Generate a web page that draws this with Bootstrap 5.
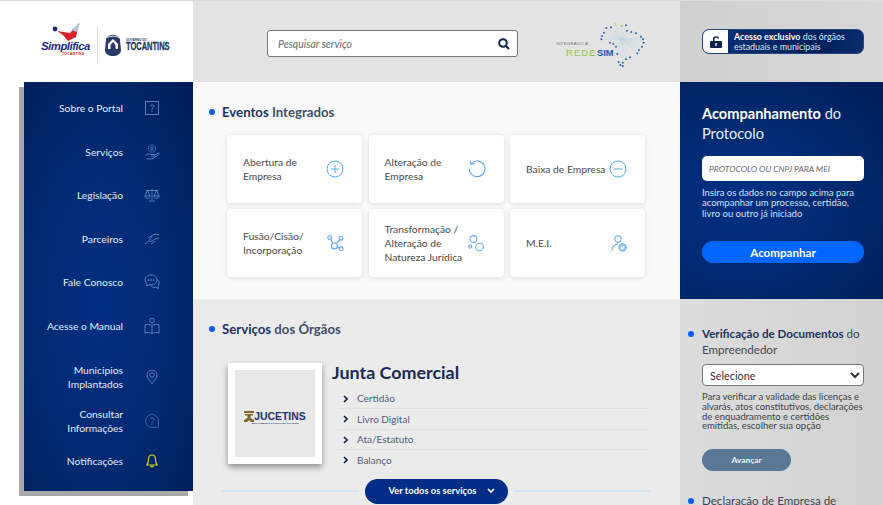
<!DOCTYPE html>
<html lang="pt-BR">
  <head>
    <meta charset="UTF-8" />
    <meta name="viewport" content="width=device-width, initial-scale=1.0" />
    <title>Simplifica Tocantins</title>
    <link href="https://cdn.jsdelivr.net/npm/bootstrap@5.3.0/dist/css/bootstrap.min.css" rel="stylesheet" />
    <style>
      html, body { height: 100%; overflow: hidden; }
      body { font-family: "Lato", "Open Sans", sans-serif; background: #fff; color: #2b3a55; }
      .page-wrap { height: 505px; border-top: 1px solid #dcdcdc; overflow: hidden; }
      .col-left { width: 193px; flex: none; }
      .col-mid { width: 487px; flex: none; }
      .col-right { width: 203px; flex: none; }
      .top-band { height: 81px; }

      /* logos */
      .brand-row { padding: 7px 0 0 41px; }
      .brand-simplifica { width: 50px; position: relative; height: 30px; flex: none; }
      .brand-word { font: italic 700 11.4px/12px "Liberation Sans", sans-serif; letter-spacing: -.5px; color: #1c2a8c; position: absolute; left: 0; top: 10px; }
      .brand-sub { font: 700 3.4px/4px "Liberation Sans", sans-serif; color: #d8252e; position: absolute; left: 21px; top: 22px; letter-spacing: .3px; }
      .brand-bird { position: absolute; left: 11px; top: -7px; }
      .brand-sep { width: 1px; height: 36px; background: #d9d9d9; margin: 0 6px; flex: none; }
      .brand-gov { font: 700 10px/10px "Liberation Sans", sans-serif; color: #25355f; transform: scaleX(.75); transform-origin: left; width: 46px; -webkit-text-stroke: .3px #25355f; }
      .brand-gov-sub { font: 700 3px/4px "Liberation Sans", sans-serif; color: #25355f; }

      /* sidebar */
      .side-holder { padding-left: 24px; }
      .side-menu { height: 409px; padding-top: 16px; color: #e4edf8; font-size: 10.3px; line-height: 14px;
        background: radial-gradient(ellipse at 45% 55%, #003084 0%, #00296f 55%, #001d58 100%);
        box-shadow: -5px 5px 0 #a8a8a8; }
      .side-item { height: 20px; margin-bottom: 23.6px; padding-right: 70px; position: relative; text-align: right; display: flex; align-items: center; justify-content: flex-end; text-decoration: none; color: inherit; }
      .side-item svg { position: absolute; left: 128px; top: 50%; transform: translate(-50%, -50%); }
      .side-two { height: 34px; margin-bottom: 10px; }
      .side-six { margin-bottom: 24px; }
      .side-eight { margin-bottom: 13px; }

      /* middle */
      .band-search { background: #e3e3e3; }
      .search-box { width: 251px; height: 27px; border: 1px solid #777; border-radius: 3px; background: #fff; margin: 4px 0 0 74px; flex: none; }
      .search-box input { font-size: 10.5px; font-style: italic; padding: 0 0 0 10px; height: 25px; border: 0; background: transparent; box-shadow: none; color: #777; }
      .search-box input::placeholder, .proto-input::placeholder { color: #6b6b6b; opacity: 1; }
      .search-box svg { margin-right: 7px; flex: none; }
      .redesim { margin: 5px 0 0 38px; flex: none; }
      .eventos-area { height: 217px; background: #fafafa; padding: 21px 35px 0 34px; }
      .orgaos-area { height: 207px; background: #ebebeb; padding: 21px 35px 0 34px; }
      .sec-title { font-size: 13.2px; font-weight: 700; color: #1d3260; line-height: 18px; margin: 0 0 0 -5px; position: relative; }
      .sec-title span { color: #414e68; }
      .blue-dot::before { content: ""; position: absolute; left: -13px; top: 6px; width: 6px; height: 6px; border-radius: 50%; background: #0a5bf0; }
      .event-grid { display: grid; grid-template-columns: repeat(3, 135px); grid-auto-rows: 68px; column-gap: 6.5px; row-gap: 6px; margin-top: 14px; }
      .event-card { border: 0; border-radius: 4px; box-shadow: 0 1px 5px rgba(0,0,0,.14); padding: 0 18px 0 16px; font-size: 10.3px; line-height: 14px; color: #4a4a4a; background: #fff; }
      .event-card svg { flex: none; }
      .icon-nudge { margin-right: 2px; }

      .junta-row { margin-top: 25px; padding-left: 1px; }
      .junta-pic { width: 94px; height: 101px; padding-top: 9px; background: #e8e8e8; border: 7px solid #fff; box-shadow: 0 3px 6px rgba(0,0,0,.4); flex: none; }
      .juce-word { font: 700 10.4px/11px "Liberation Sans", sans-serif; color: #25306e; }
      .juce-sub { font: 700 2px/3px "Liberation Sans", sans-serif; color: #25306e; white-space: nowrap; }
      .junta-title { font-size: 17.9px; font-weight: 700; color: #172a55; line-height: 18px; margin: 0 0 8px; }
      .junta-info { margin-left: 10px; width: 316px; flex: none; }
      .junta-list { list-style: none; margin: 0 0 0 6px; padding: 0; }
      .junta-list li { height: 20.4px; border-bottom: 1px solid #e0e0e0; font-size: 10px; color: #4d5c7c; padding-left: 19px; display: flex; align-items: center; position: relative; }
      .junta-list li:last-child { border-bottom: 0; }
      .junta-list svg { position: absolute; left: 5px; top: 6px; }
      .more-row { margin: 8px -5px 0 -5px; }
      .more-line { flex: 1; height: 2px; background: #d3e1f6; }
      .more-btn { width: 143px; height: 25px; border-radius: 13px; background: #002d85; color: #fff; font-size: 9.4px; font-weight: 700; border: 0; padding: 0 0 0 12px; margin: 0 6px; flex: none; }
      .more-btn svg { margin-left: 11px; }

      /* right */
      .band-access { background: linear-gradient(90deg, #d0d0d0, #d8d8d8); padding: 28px 19px 0 22px; }
      .access-pill { height: 25px; border-radius: 7px; overflow: hidden; border: 1px solid #25457c; background: linear-gradient(90deg, #0a3378, #001f5c 70%, #0a2c6b); color: #dbe6f5; font-size: 8.9px; line-height: 10px; }
      .access-lock { width: 25px; background: #fff; flex: none; }
      .access-txt { padding-left: 6px; white-space: nowrap; }
      .access-pill b { color: #fff; }
      .proto-panel { height: 217px; padding: 22px 19px 0 22px; color: #fff;
        background: radial-gradient(ellipse at 30% 55%, #003084 0%, #00296f 50%, #001d58 100%); }
      .proto-title { font-size: 14.6px; line-height: 20px; font-weight: 400; color: #e3ecf8; margin: 0 0 12px; }
      .proto-title b { color: #fff; }
      .proto-input { height: 25px; border-radius: 5px; border: 0; font-size: 8.5px; font-style: italic; padding: 0 7px; }
      .proto-help { font-size: 9.5px; line-height: 10.4px; color: #d6e3f4; margin: 7px 0 0; }
      .proto-btn { display: block; width: 100%; height: 22px; margin-top: 22px; padding: 0; border: 0; border-radius: 11px; background: #0066ff; color: #fff; font-size: 11.6px; font-weight: 700; }
      .verify-area { height: 207px; background: linear-gradient(90deg, #dcdcdc, #d2d2d2); padding: 27px 19px 0 22px; }
      .verify-title { font-size: 11.6px; line-height: 16px; font-weight: 400; color: #3c4656; margin: 0; position: relative; }
      .verify-title b { color: #1d3260; }
      .verify-title.blue-dot::before { left: -14px; top: 5px; }
      .verify-select { height: 22px; margin-top: 6px; padding: 0 2px 0 3px; font-size: 10.8px; border: 1px solid #777; border-radius: 4px; color: #333; appearance: auto; background-image: none; }
      .verify-help { font-size: 9.5px; line-height: 9.8px; color: #3a3f48; margin: 6px 0 0; white-space: nowrap; }
      .verify-btn { display: block; width: 89px; height: 22px; border: 0; padding: 0; margin-top: 18px; border-radius: 11px; background: #5a7896; color: #eef2f6; font-size: 8.4px; font-weight: 700; }
      .verify-next { margin-top: 22px; }
    </style>
  </head>
  <body>
    <div class="page-wrap d-flex">
      <!-- Left column -->
      <div class="col-left">
        <div class="top-band brand-row d-flex align-items-center">
          <div class="brand-simplifica">
            <svg class="brand-bird" width="32" height="20" viewBox="0 0 32 20">
              <circle cx="3" cy="6" r="2.4" fill="#1b2a78" />
              <path d="M5 8 L18 10 L27 0 L24 14 L16 18 L11 12Z" fill="#d8202c" />
              <path d="M19 7 L28 0 L25 9Z" fill="#b9c2dc" />
            </svg>
            <span class="brand-word">Simplifica</span>
            <span class="brand-sub">TOCANTINS</span>
          </div>
          <div class="brand-sep"></div>
          <svg width="18" height="23" viewBox="0 0 18 23" class="flex-shrink-0">
            <path d="M9 1 C13 1 16 3 16 6 L17 16 C17 20 13 22 9 22 C5 22 1 20 1 16 L2 6 C2 3 5 1 9 1Z" fill="#2a3a66" />
            <path d="M9 5 L14 10 L14 15 L4 15 L4 10Z" fill="#fff" />
            <path d="M9 8 L11.5 11 L11.5 15 L6.5 15 L6.5 11Z" fill="#2a3a66" />
            <path d="M3 3.5 C6 1.8 12 1.8 15 3.5" stroke="#fff" stroke-width=".8" fill="none" />
          </svg>
          <div class="ms-1">
            <div class="brand-gov-sub">GOVERNO DO</div>
            <div class="brand-gov">TOCANTINS</div>
          </div>
        </div>
        <div class="side-holder">
          <nav class="side-menu">
            <a class="side-item" href="#">Sobre o Portal
              <svg width="14" height="14" viewBox="0 0 14 14" fill="none" stroke="#5d8cc4" stroke-width=".9"><rect x=".5" y=".5" width="13" height="13" /><path d="M5 5.2 C5 3.4 9 3.4 9 5.2 C9 6.8 7 6.6 7 8.4 M7 9.6 V10.8" /></svg>
            </a>
            <a class="side-item" href="#">Serviços
              <svg width="16" height="16" viewBox="0 0 16 16" fill="none" stroke="#5d8cc4" stroke-width=".9"><circle cx="8" cy="4.5" r="3.6" stroke-dasharray="2 .6" /><circle cx="8" cy="4.5" r="1.4" /><path d="M1 12 C3 9.5 5 9.5 7 10.5 H10 C11 10.5 11 12 10 12 H7 M10.5 11 L14 9 C15.5 8.5 15.5 10 14.5 10.6 L9 14.5 C7 15.5 4 14.5 2.5 14.8" /></svg>
            </a>
            <a class="side-item" href="#">Legislação
              <svg width="16" height="14" viewBox="0 0 16 14" fill="none" stroke="#5d8cc4" stroke-width=".9"><path d="M8 1 V12 M5 13 H11 M2 2.5 H14 M3.4 2.5 L1 8 C1 11 6 11 6 8 L3.4 2.5 M12.6 2.5 L10 8 C10 11 15 11 15 8 L12.6 2.5 M1 8 H6 M10 8 H15" /></svg>
            </a>
            <a class="side-item" href="#">Parceiros
              <svg width="16" height="12" viewBox="0 0 16 12" fill="none" stroke="#5d8cc4" stroke-width=".9"><path d="M1 11 L5 8 M5 8 L9 2 C10 1 12 1 15 2 M4 5 L8 2.5 M6 9 L11 6 L15 5 M7 11 L11 8" /></svg>
            </a>
            <a class="side-item" href="#">Fale Conosco
              <svg width="16" height="16" viewBox="0 0 16 16" fill="none" stroke="#5d8cc4" stroke-width=".9"><path d="M7 1 C3 1 1 3.4 1 6 C1 7.6 1.8 8.8 3 9.6 L2.6 12 L5.4 10.6 C9.5 11.4 13 9.4 13 6 C13 3.4 11 1 7 1Z" /><path d="M13.4 5.6 C15 6.6 15.4 8.4 15 10 C14.7 11 14 11.6 14 12 L14.4 14.6 L11.6 13.2 C9.6 13.6 7.6 13 6.6 11.4" /><circle cx="4.6" cy="6" r=".5" /><circle cx="7" cy="6" r=".5" /><circle cx="9.4" cy="6" r=".5" /></svg>
            </a>
            <a class="side-item side-six" href="#">Acesse o Manual
              <svg width="16" height="17" viewBox="0 0 16 17" fill="none" stroke="#5d8cc4" stroke-width=".9"><circle cx="8" cy="3" r="2.3" /><path d="M8 8 C6 6.6 3.4 6.6 1 7.2 V15.5 C3.4 14.9 6 14.9 8 16 C10 14.9 12.6 14.9 15 15.5 V7.2 C12.6 6.6 10 6.6 8 8Z M8 8 V16" /></svg>
            </a>
            <a class="side-item side-two" href="#"><span>Municipios<br />Implantados</span>
              <svg width="12" height="15" viewBox="0 0 12 15" fill="none" stroke="#5d8cc4" stroke-width=".9"><path d="M6 14.3 C3.6 10.6 1 8.6 1 5.6 C1 2.8 3.2 .7 6 .7 C8.8 .7 11 2.8 11 5.6 C11 8.6 8.4 10.6 6 14.3Z" /><circle cx="6" cy="5.4" r="2.3" /></svg>
            </a>
            <a class="side-item side-two side-eight" href="#"><span>Consultar<br />Informações</span>
              <svg width="14" height="14" viewBox="0 0 14 14" fill="none" stroke="#3f74b4" stroke-width=".9"><path d="M7 .6 C3.4 .6 .6 3.4 .6 7 C.6 10.6 3.4 13.4 7 13.4 H13.4 V12.4 C13.4 12.4 13.4 9 13.4 7 C13.4 3.4 10.6 .6 7 .6Z" /><path d="M5 5.2 C5 3.4 9 3.4 9 5.2 C9 6.6 7 6.6 7 8.2 M7 9.4 V10.4" /></svg>
            </a>
            <a class="side-item" href="#">Notificações
              <svg width="12" height="14" viewBox="0 0 12 14" fill="none" stroke="#d6d214" stroke-width="1.2"><path d="M6 1 C3.6 1 2.6 3 2.6 5 C2.6 8 1.6 10 .8 11 H11.2 C10.4 10 9.4 8 9.4 5 C9.4 3 8.4 1 6 1Z" /><path d="M4.6 11.4 C4.6 13.4 7.4 13.4 7.4 11.4" /></svg>
            </a>
          </nav>
        </div>
      </div>

      <!-- Middle column -->
      <div class="col-mid">
        <div class="top-band band-search d-flex align-items-center">
          <div class="search-box d-flex align-items-center">
            <input class="form-control" type="text" placeholder="Pesquisar serviço" />
            <svg width="12" height="12" viewBox="0 0 12 12" fill="none" stroke="#0c2350" stroke-width="2"><circle cx="5" cy="5" r="3.8" /><path d="M7.8 7.8 L11 11" /></svg>
          </div>
          <svg class="redesim" width="90" height="48" viewBox="0 0 90 48">
            <g stroke="#a9d3e4" stroke-width=".35"><path d="M65.7 19.3 L50.3 8 M65.7 19.3 L55 7.3 M65.7 19.3 L59.3 4 M65.7 19.3 L65.7 6 M65.7 19.3 L70 5.3 M65.7 19.3 L71 10.7 M65.7 19.3 L75.3 12 M65.7 19.3 L80 13.3 M65.7 19.3 L85 16.7 M65.7 19.3 L87 19.3 M65.7 19.3 L87.7 22.7 M65.7 19.3 L86 26.7 M65.7 19.3 L83 30 M65.7 19.3 L81.3 33.3 M65.7 19.3 L74 37.3 M65.7 19.3 L70 39.3 M65.7 19.3 L66.7 42.7 M65.7 19.3 L61.3 34 M65.7 19.3 L54 22.7 M65.7 19.3 L60 26.7 M65.7 19.3 L48 12.7 M65.7 19.3 L46 16 M65.7 19.3 L45.3 19.3" /></g>
            <g fill="#2f5fb4">
              <circle cx="70" cy="5.3" r="1" /><circle cx="50.3" cy="8" r="1" /><circle cx="55" cy="7.3" r="1" /><circle cx="48" cy="12.7" r="1" /><circle cx="46" cy="16" r="1" /><circle cx="45.3" cy="19.3" r="1" /><circle cx="71" cy="10.7" r="1" /><circle cx="75.3" cy="12" r="1" /><circle cx="80" cy="13.3" r="1" /><circle cx="85" cy="16.7" r="1" /><circle cx="87" cy="19.3" r="1" /><circle cx="87.7" cy="22.7" r="1" /><circle cx="86" cy="26.7" r="1" /><circle cx="83" cy="30" r="1" /><circle cx="81.3" cy="33.3" r="1" /><circle cx="74" cy="37.3" r="1" /><circle cx="70" cy="39.3" r="1" /><circle cx="66.7" cy="42.7" r="1" /><circle cx="62.7" cy="42" r="1" /><circle cx="66.7" cy="46" r="1" /><circle cx="64.3" cy="45" r="1" /><circle cx="54" cy="22.7" r="1" /><circle cx="57.3" cy="24" r="1" /><circle cx="60" cy="26.7" r="1" /><circle cx="61.3" cy="34" r="1" />
            </g>
            <circle cx="59.3" cy="4" r="1.1" fill="#e8d92a" /><circle cx="65.7" cy="6" r="1" fill="#8fc43a" />
            <text x="0" y="25" font-family="Liberation Sans, sans-serif" font-size="4.4" letter-spacing=".2" fill="#777">INTEGRADO A</text>
            <text x="10" y="36" font-family="Liberation Sans, sans-serif" font-size="9.6" fill="#92c63e" letter-spacing="1">REDE</text>
            <text x="41" y="36" font-family="Liberation Sans, sans-serif" font-size="9.4" font-weight="700" fill="#2459a6">SIM</text>
          </svg>
        </div>

        <section class="eventos-area">
          <h2 class="sec-title blue-dot">Eventos <span>Integrados</span></h2>
          <div class="event-grid">
            <div class="card event-card d-flex flex-row align-items-center justify-content-between">
              <span>Abertura de<br />Empresa</span>
              <svg width="18" height="18" viewBox="0 0 18 18" fill="none" stroke="#4fb0ee" stroke-width="1"><circle cx="9" cy="9" r="8" /><path d="M9 5 V13 M5 9 H13" /></svg>
            </div>
            <div class="card event-card d-flex flex-row align-items-center justify-content-between">
              <span>Alteração de<br />Empresa</span>
              <svg width="18" height="18" viewBox="0 0 18 18" fill="none" stroke="#5aa6ea" stroke-width="1.1"><path d="M3.6 3.4 A7.8 7.8 0 1 1 1.4 8.6" /><path d="M2.4 .8 L3.2 4.4 L6.8 3.8" /></svg>
            </div>
            <div class="card event-card d-flex flex-row align-items-center justify-content-between">
              <span>Baixa de Empresa</span>
              <svg width="18" height="18" viewBox="0 0 18 18" fill="none" stroke="#4fb0ee" stroke-width="1"><circle cx="9" cy="9" r="8" /><path d="M4.5 9 H13.5" /></svg>
            </div>
            <div class="card event-card d-flex flex-row align-items-center justify-content-between">
              <span>Fusão/Cisão/<br />Incorporação</span>
              <svg width="17" height="17" viewBox="0 0 17 17" fill="none" stroke="#5aa6ea" stroke-width="1.1"><circle cx="2.6" cy="2.6" r="1.9" /><circle cx="14" cy="3.2" r="1.9" /><circle cx="14.2" cy="13.8" r="1.9" /><circle cx="7.4" cy="11" r="3" /><path d="M3.6 4.2 L6 8.4 M12.8 4.8 L9.4 8.6 M10.2 12 L12.4 13.2" /></svg>
            </div>
            <div class="card event-card d-flex flex-row align-items-center justify-content-between">
              <span>Transformação /<br />Alteração de<br />Natureza Jurídica</span>
              <svg class="icon-nudge" width="16" height="17" viewBox="0 0 16 17" fill="none" stroke="#5aa6ea" stroke-width="1.1"><circle cx="5.4" cy="4" r="3.4" /><circle cx="11.6" cy="12" r="3.8" /><circle cx="2.2" cy="11.6" r="1.6" /></svg>
            </div>
            <div class="card event-card d-flex flex-row align-items-center justify-content-between">
              <span>M.E.I.</span>
              <svg width="16" height="17" viewBox="0 0 16 17" fill="none" stroke="#5aa6ea" stroke-width="1.1"><circle cx="7" cy="4" r="3.2" /><path d="M.8 15.5 C1.4 11.5 3.6 9 7 9" /><circle cx="11.6" cy="12.4" r="3.6" fill="#a9d3f5" /><path d="M10 12.4 L11.2 13.6 L13.2 11.4" stroke="#fff" /></svg>
            </div>
          </div>
        </section>

        <section class="orgaos-area">
          <h2 class="sec-title blue-dot">Serviços <span>dos Órgãos</span></h2>
          <div class="junta-row d-flex">
            <div class="junta-pic d-flex flex-column align-items-center justify-content-center">
              <div class="d-flex align-items-center">
                <svg width="10" height="11" viewBox="0 0 10 11"><path d="M0 0 H10 V2 H0Z M1 3 H9 V4.5 H6.5 V7 L10 9 V11 H7 L5 9 L3 11 H0 V9 L3.5 7 V4.5 H1Z" fill="#7a6a2a" /></svg>
                <span class="juce-word">JUCETINS</span>
              </div>
              <div class="juce-sub">JUNTA COMERCIAL DO ESTADO DO TOCANTINS</div>
            </div>
            <div class="junta-info">
              <h3 class="junta-title">Junta Comercial</h3>
              <ul class="junta-list">
                <li><svg width="5" height="8" viewBox="0 0 5 8" fill="none" stroke="#0c2350" stroke-width="1.6"><path d="M1 1 L4 4 L1 7" /></svg>Certidão</li>
                <li><svg width="5" height="8" viewBox="0 0 5 8" fill="none" stroke="#0c2350" stroke-width="1.6"><path d="M1 1 L4 4 L1 7" /></svg>Livro Digital</li>
                <li><svg width="5" height="8" viewBox="0 0 5 8" fill="none" stroke="#0c2350" stroke-width="1.6"><path d="M1 1 L4 4 L1 7" /></svg>Ata/Estatuto</li>
                <li><svg width="5" height="8" viewBox="0 0 5 8" fill="none" stroke="#0c2350" stroke-width="1.6"><path d="M1 1 L4 4 L1 7" /></svg>Balanço</li>
              </ul>
            </div>
          </div>
          <div class="more-row d-flex align-items-center">
            <div class="more-line"></div>
            <button class="btn more-btn d-flex align-items-center justify-content-center" type="button">
              Ver todos os serviços
              <svg width="8" height="6" viewBox="0 0 8 6" fill="none" stroke="#fff" stroke-width="1.7"><path d="M1 1 L4 4 L7 1" /></svg>
            </button>
            <div class="more-line"></div>
          </div>
        </section>
      </div>

      <!-- Right column -->
      <div class="col-right">
        <div class="top-band band-access">
          <div class="access-pill d-flex">
            <div class="access-lock d-flex align-items-center justify-content-center">
              <svg width="12" height="13" viewBox="0 0 12 13"><path d="M3 6 V3.6 C3 .6 9 .6 9 3.6 H7.4 C7.4 2.4 4.6 2.4 4.6 3.6 V6 H11 A1 1 0 0 1 12 7 V12 A1 1 0 0 1 11 13 H1 A1 1 0 0 1 0 12 V7 A1 1 0 0 1 1 6Z M6 8 A1 1 0 0 0 5.4 9.8 V11 H6.6 V9.8 A1 1 0 0 0 6 8Z" fill="#0c2350" fill-rule="evenodd" /></svg>
            </div>
            <div class="access-txt d-flex align-items-center"><span><b>Acesso exclusivo</b> dos órgãos<br />estaduais e municipais</span></div>
          </div>
        </div>
        <section class="proto-panel">
          <h2 class="proto-title"><b>Acompanhamento</b> do<br />Protocolo</h2>
          <input class="form-control proto-input" type="text" placeholder="PROTOCOLO OU CNPJ PARA MEI" />
          <p class="proto-help">Insira os dados no campo acima para acompanhar um processo, certidão, livro ou outro já iniciado</p>
          <button class="btn proto-btn" type="button">Acompanhar</button>
        </section>
        <section class="verify-area">
          <h2 class="verify-title blue-dot"><b>Verificação de Documentos</b> do<br />Empreendedor</h2>
          <select class="form-select verify-select">
            <option>Selecione</option>
          </select>
          <p class="verify-help">Para verificar a validade das licenças e<br />alvarás, atos constitutivos, declarações<br />de enquadramento e certidões<br />emitidas, escolher sua opção</p>
          <button class="btn verify-btn" type="button">Avançar</button>
          <h2 class="verify-title blue-dot verify-next">Declaração de Empresa de</h2>
        </section>
      </div>
    </div>

    <script src="https://cdn.jsdelivr.net/npm/bootstrap@5.3.0/dist/js/bootstrap.bundle.min.js"></script>
  </body>
</html>
